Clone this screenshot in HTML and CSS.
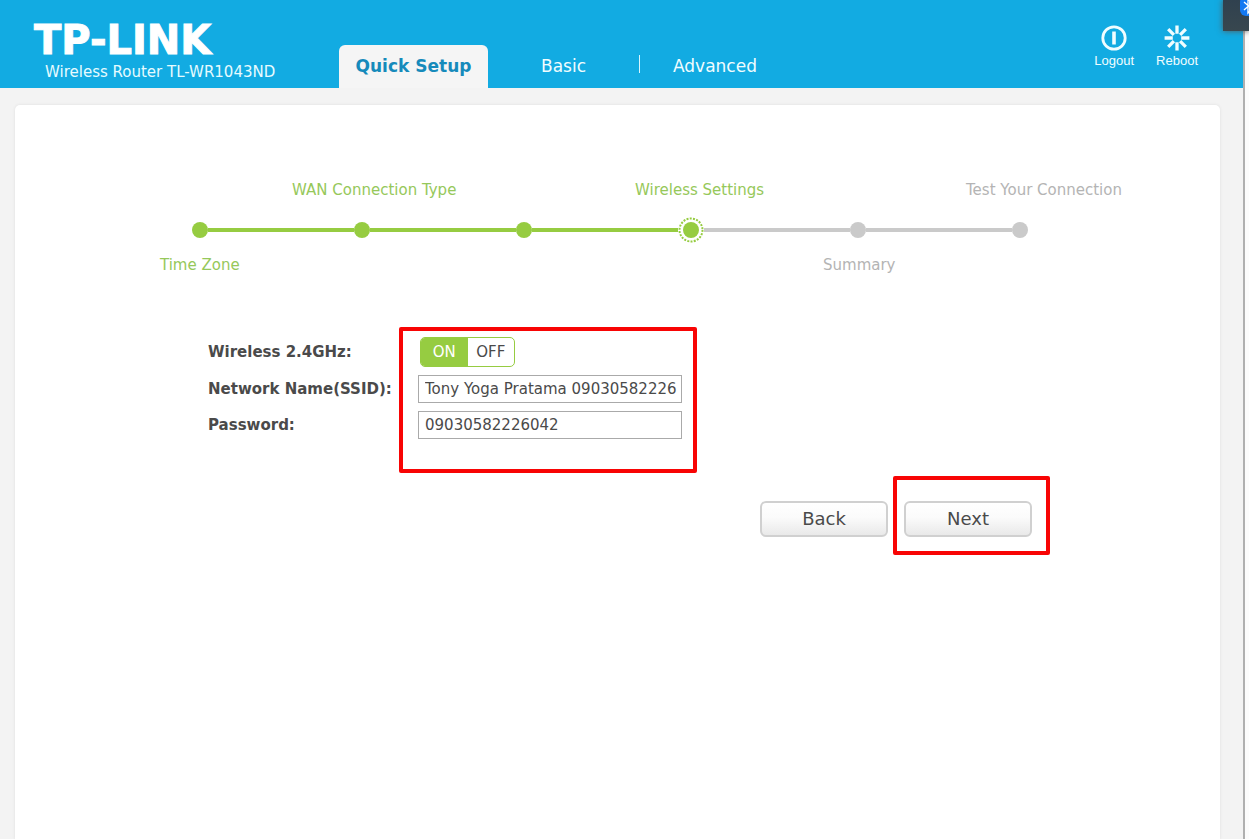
FILE: index.html
```html
<!DOCTYPE html>
<html lang="en">
<head>
<meta charset="utf-8">
<title>TL-WR1043ND</title>
<link rel="stylesheet" href="styles.css">
</head>
<body>
<div class="page">
  <header class="header">
    <div class="brand">
      <div class="logo">TP-LINK</div>
      <div class="model">Wireless Router TL-WR1043ND</div>
    </div>
    <nav class="tabs">
      <a class="tab tab-active" href="#quick">Quick Setup</a>
      <a class="tab tab-basic" href="#basic">Basic</a>
      <span class="divider"></span>
      <a class="tab tab-advanced" href="#advanced">Advanced</a>
    </nav>
    <div class="actions">
      <button class="action" type="button">
        <svg width="26" height="26" viewBox="0 0 26 26" fill="none" stroke="currentColor"><circle cx="13" cy="13" r="11.2" stroke-width="2.8"/><path d="M13 6.5v13" stroke-width="3.6"/></svg>
        Logout
      </button>
      <button class="action" type="button">
        <svg width="26" height="26" viewBox="0 0 26 26" fill="none" stroke="currentColor" stroke-width="3.3"><path d="M13 .6v8.2M13 17.2v8.2M.6 13h8.2M17.2 13h8.2M4.2 4.2l5.7 5.7M16.1 16.1l5.7 5.7M4.2 21.8l5.7-5.7M16.1 9.9l5.7-5.7"/></svg>
        Reboot
      </button>
    </div>
  </header>
  <main class="card">
    <section class="steps">
      <div class="labels labels-top">
        <span>WAN Connection Type</span>
        <span>Wireless Settings</span>
        <span class="pending">Test Your Connection</span>
      </div>
      <div class="track">
        <i class="dot"></i><i class="line"></i>
        <i class="dot"></i><i class="line"></i>
        <i class="dot"></i><i class="line"></i>
        <svg class="current" width="26" height="26" viewBox="0 0 26 26"><circle cx="13" cy="13" r="8" fill="#96cc41"/><circle cx="13" cy="13" r="11.5" fill="none" stroke="#96cc41" stroke-width="2" stroke-dasharray="2 1.285"/></svg>
        <i class="line todo"></i><i class="dot todo"></i>
        <i class="line todo"></i><i class="dot todo"></i>
      </div>
      <div class="labels labels-bottom">
        <span>Time Zone</span>
        <span class="pending">Summary</span>
      </div>
    </section>
    <form class="settings">
      <div class="fields">
        <span class="name" id="radio-label">Wireless 2.4GHz:</span>
        <div class="switch" role="radiogroup" aria-labelledby="radio-label">
          <label class="option"><input type="radio" name="radio" checked>ON</label>
          <label class="option"><input type="radio" name="radio">OFF</label>
        </div>
        <label class="name" for="ssid">Network Name(SSID):</label>
        <input class="text" id="ssid" type="text" value="Tony Yoga Pratama 09030582226">
        <label class="name" for="password">Password:</label>
        <input class="text" id="password" type="text" value="09030582226042">
        <span class="mark mark-fields"></span>
      </div>
      <div class="buttons">
        <button class="button" type="button">Back</button>
        <div class="next"><button class="button" type="button">Next</button><span class="mark mark-next"></span></div>
      </div>
    </form>
  </main>
</div>
<div class="edge"></div>
<div class="tray">
  <svg width="15" height="20" viewBox="0 0 15 20" fill="none"><rect width="20" height="20" rx="6" fill="#1479f2"/><path d="M4 6l8 7-4 4V3l4 4-8 7" stroke="#fff" stroke-width="1.4"/></svg>
</div>
</body>
</html>
```
FILE: styles.css
```css
* { box-sizing: border-box; }

body {
  margin: 0;
  display: flex;
  min-height: 100vh;
  color: #4a4a4a;
  background: #f3f3f3;
  font: 15px/20px Verdana, "DejaVu Sans", sans-serif;
}

.page { flex: 1; min-width: 0; display: flex; flex-direction: column; }

.edge { width: 6px; background: #fcfcfc; border-left: 2px solid #b0b0b0; }

.header {
  display: flex;
  height: 88px;
  padding-right: 45px;
  color: #fff;
  background: #12abe2;
}

.brand { width: 339px; padding: 22px 0 0 34px; white-space: nowrap; }
.logo { font-size: 40px; line-height: 36px; font-weight: bold; -webkit-text-stroke: 1px #fff; }
.model { margin: 4px 0 0 11px; color: #e6fbff; }

.tabs { display: flex; align-items: flex-end; }
.tab {
  height: 43px;
  color: #f0fdff;
  font-size: 17px;
  line-height: 42px;
  text-decoration: none;
}
.tab-active {
  width: 149px;
  text-align: center;
  font-weight: bold;
  color: #168abb;
  background: #f5f5f5;
  border-radius: 6px 6px 0 0;
}
.tab-basic { width: 151px; padding-left: 53px; }
.tab-advanced { padding-left: 33px; }
.divider { width: 1px; height: 18px; margin-bottom: 15px; background: #d8f5fd; }

.actions { display: flex; gap: 22px; margin-left: auto; padding-top: 25px; }
.action {
  display: flex;
  flex-direction: column;
  align-items: center;
  align-self: flex-start;
  padding: 0;
  gap: 2px;
  border: 0;
  background: none;
  color: #f0fdff;
  font: 13px/16px "Liberation Sans", Arial, sans-serif;
}

.card {
  flex: 1;
  margin: 17px 23px 0 15px;
  padding-top: 75px;
  background: #fff;
  border-radius: 5px 5px 0 0;
  box-shadow: 0 0 3px #ddd;
}

.steps { padding: 0 96px 0 145px; color: #96c85a; }
.labels { display: grid; white-space: nowrap; }
.labels-top { margin-left: 132px; grid-template-columns: 343fr 331fr 158px; }
.labels-bottom { grid-template-columns: 663fr 301fr; }
.pending { color: #b4b4b4; }

.track { display: flex; align-items: center; height: 26px; margin: 17px 96px 12px 32px; }
.dot { width: 16px; height: 16px; border-radius: 50%; background: #96cc41; }
.line { flex: 1; height: 4px; background: #96cc41; }
.todo { background: #cacaca; }

.settings { padding: 62px 188px 0 193px; }
.fields {
  position: relative;
  display: grid;
  grid-template-columns: 210px 264px;
  row-gap: 8px;
  align-items: center;
}
.name { font-weight: bold; white-space: nowrap; }

.switch {
  display: flex;
  width: 95px;
  height: 30px;
  margin-left: 2px;
  overflow: hidden;
  border: 1px solid #96cc41;
  border-radius: 5px;
}
.option { flex: 1; line-height: 28px; text-align: center; }
.option:has(:checked) { color: #fff; background: #96cc41; }
.option input { position: absolute; opacity: 0; }

.text {
  width: 100%;
  height: 28px;
  padding: 0 0 0 6px;
  border: 1px solid #aaa;
  background: #fff;
  color: inherit;
  font: inherit;
}

.mark { position: absolute; border: 4px solid #f80404; border-radius: 2px; pointer-events: none; }
.mark-fields { top: -10px; left: 191px; width: 298px; height: 146px; }
.mark-next { inset: -25px -18px -18px -11px; }

.buttons { display: flex; justify-content: flex-end; gap: 16px; margin-top: 62px; }
.next { position: relative; }
.button {
  width: 128px;
  height: 36px;
  padding: 0;
  border: 2px solid #d0d0d0;
  border-radius: 6px;
  background: linear-gradient(#fff, #fbfbfb 45%, #e9e9e9);
  color: inherit;
  font: 18px/30px Verdana, "DejaVu Sans", sans-serif;
}

.tray {
  position: absolute;
  top: 0;
  right: 0;
  width: 26px;
  height: 31px;
  padding-left: 17px;
  overflow: hidden;
  background: linear-gradient(#30414f, #38474f);
  box-shadow: 0 0 6px #555;
}
.tray svg { display: block; margin-top: -4px; }
```
